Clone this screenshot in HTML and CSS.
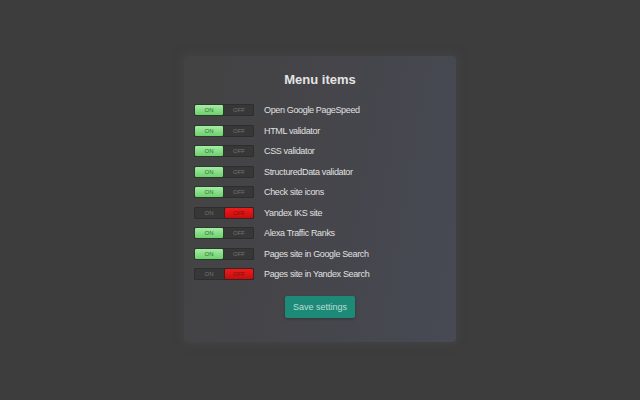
FILE: index.html
```
<!DOCTYPE html>
<html>
<head>
<meta charset="utf-8">
<link rel="stylesheet" href="styles.css">
</head>
<body>
<div class="panel">
  <h1 class="title">Menu items</h1>
  <ul class="list">
    <li class="row"><span class="tg on"><span class="half a">ON</span><span class="half b">OFF</span></span><span class="label">Open Google PageSpeed</span></li>
    <li class="row"><span class="tg on"><span class="half a">ON</span><span class="half b">OFF</span></span><span class="label">HTML validator</span></li>
    <li class="row"><span class="tg on"><span class="half a">ON</span><span class="half b">OFF</span></span><span class="label">CSS validator</span></li>
    <li class="row"><span class="tg on"><span class="half a">ON</span><span class="half b">OFF</span></span><span class="label">StructuredData validator</span></li>
    <li class="row"><span class="tg on"><span class="half a">ON</span><span class="half b">OFF</span></span><span class="label">Check site icons</span></li>
    <li class="row"><span class="tg off"><span class="half a">ON</span><span class="half b">OFF</span></span><span class="label">Yandex IKS site</span></li>
    <li class="row"><span class="tg on"><span class="half a">ON</span><span class="half b">OFF</span></span><span class="label">Alexa Traffic Ranks</span></li>
    <li class="row"><span class="tg on"><span class="half a">ON</span><span class="half b">OFF</span></span><span class="label">Pages site in Google Search</span></li>
    <li class="row"><span class="tg off"><span class="half a">ON</span><span class="half b">OFF</span></span><span class="label">Pages site in Yandex Search</span></li>
  </ul>
  <div class="actions"><button class="save">Save settings</button></div>
</div>
</body>
</html>
```
FILE: styles.css
```
html, body {
  margin: 0;
  padding: 0;
  height: 100%;
}
body {
  background: #3d3d3d;
  font-family: "Liberation Sans", Arial, sans-serif;
  color: #e2e2e2;
  overflow: hidden;
}
.panel {
  width: 272px;
  margin: 56px auto 0;
  box-sizing: border-box;
  padding: 14px 10px 24px;
  background: linear-gradient(100deg, #434343 0%, #45454a 45%, #474a54 100%);
  border-radius: 4px;
  box-shadow: 0 0 8px 2px rgba(72,72,76,0.6);
}
.title {
  margin: 0 0 14px;
  text-align: center;
  font-size: 13px;
  line-height: 20px;
  font-weight: bold;
  color: #e4e4e4;
}
.list {
  list-style: none;
  margin: 0;
  padding: 0;
  display: flex;
  flex-direction: column;
  gap: 8.5px;
}
.row {
  display: flex;
  align-items: center;
  gap: 10px;
  height: 12px;
}
.tg {
  display: flex;
  width: 60px;
  height: 12px;
  box-sizing: border-box;
  background: #373737;
  border-radius: 2px;
  box-shadow: inset 0 0 0 1px #2e2e2e;
  flex: none;
}
.half {
  width: 30px;
  height: 12px;
  box-sizing: border-box;
  font-size: 6px;
  line-height: 12px;
  text-align: center;
  color: #747474;
  border-radius: 2px;
}
.tg.on .a {
  background: linear-gradient(#a6eca6, #6cd06c);
  border: 1px solid #2b3a2b;
  line-height: 10px;
  color: #2f6f2f;
}
.tg.off .b {
  background: linear-gradient(#ee1c1c, #c80c0c);
  border: 1px solid #3a2222;
  line-height: 10px;
  color: #7a1010;
}
.label {
  font-size: 9px;
  letter-spacing: -0.35px;
  color: #e0e0e0;
  white-space: nowrap;
}
.actions {
  display: flex;
  justify-content: center;
  margin-top: 16px;
}
.save {
  width: 70px;
  height: 22px;
  border: none;
  border-radius: 2px;
  background: #1d8a78;
  color: #b9ddd6;
  font-family: "Liberation Sans", Arial, sans-serif;
  font-size: 9px;
  padding: 0;
  box-shadow: 0 1px 3px rgba(0,0,0,0.25);
}
```
